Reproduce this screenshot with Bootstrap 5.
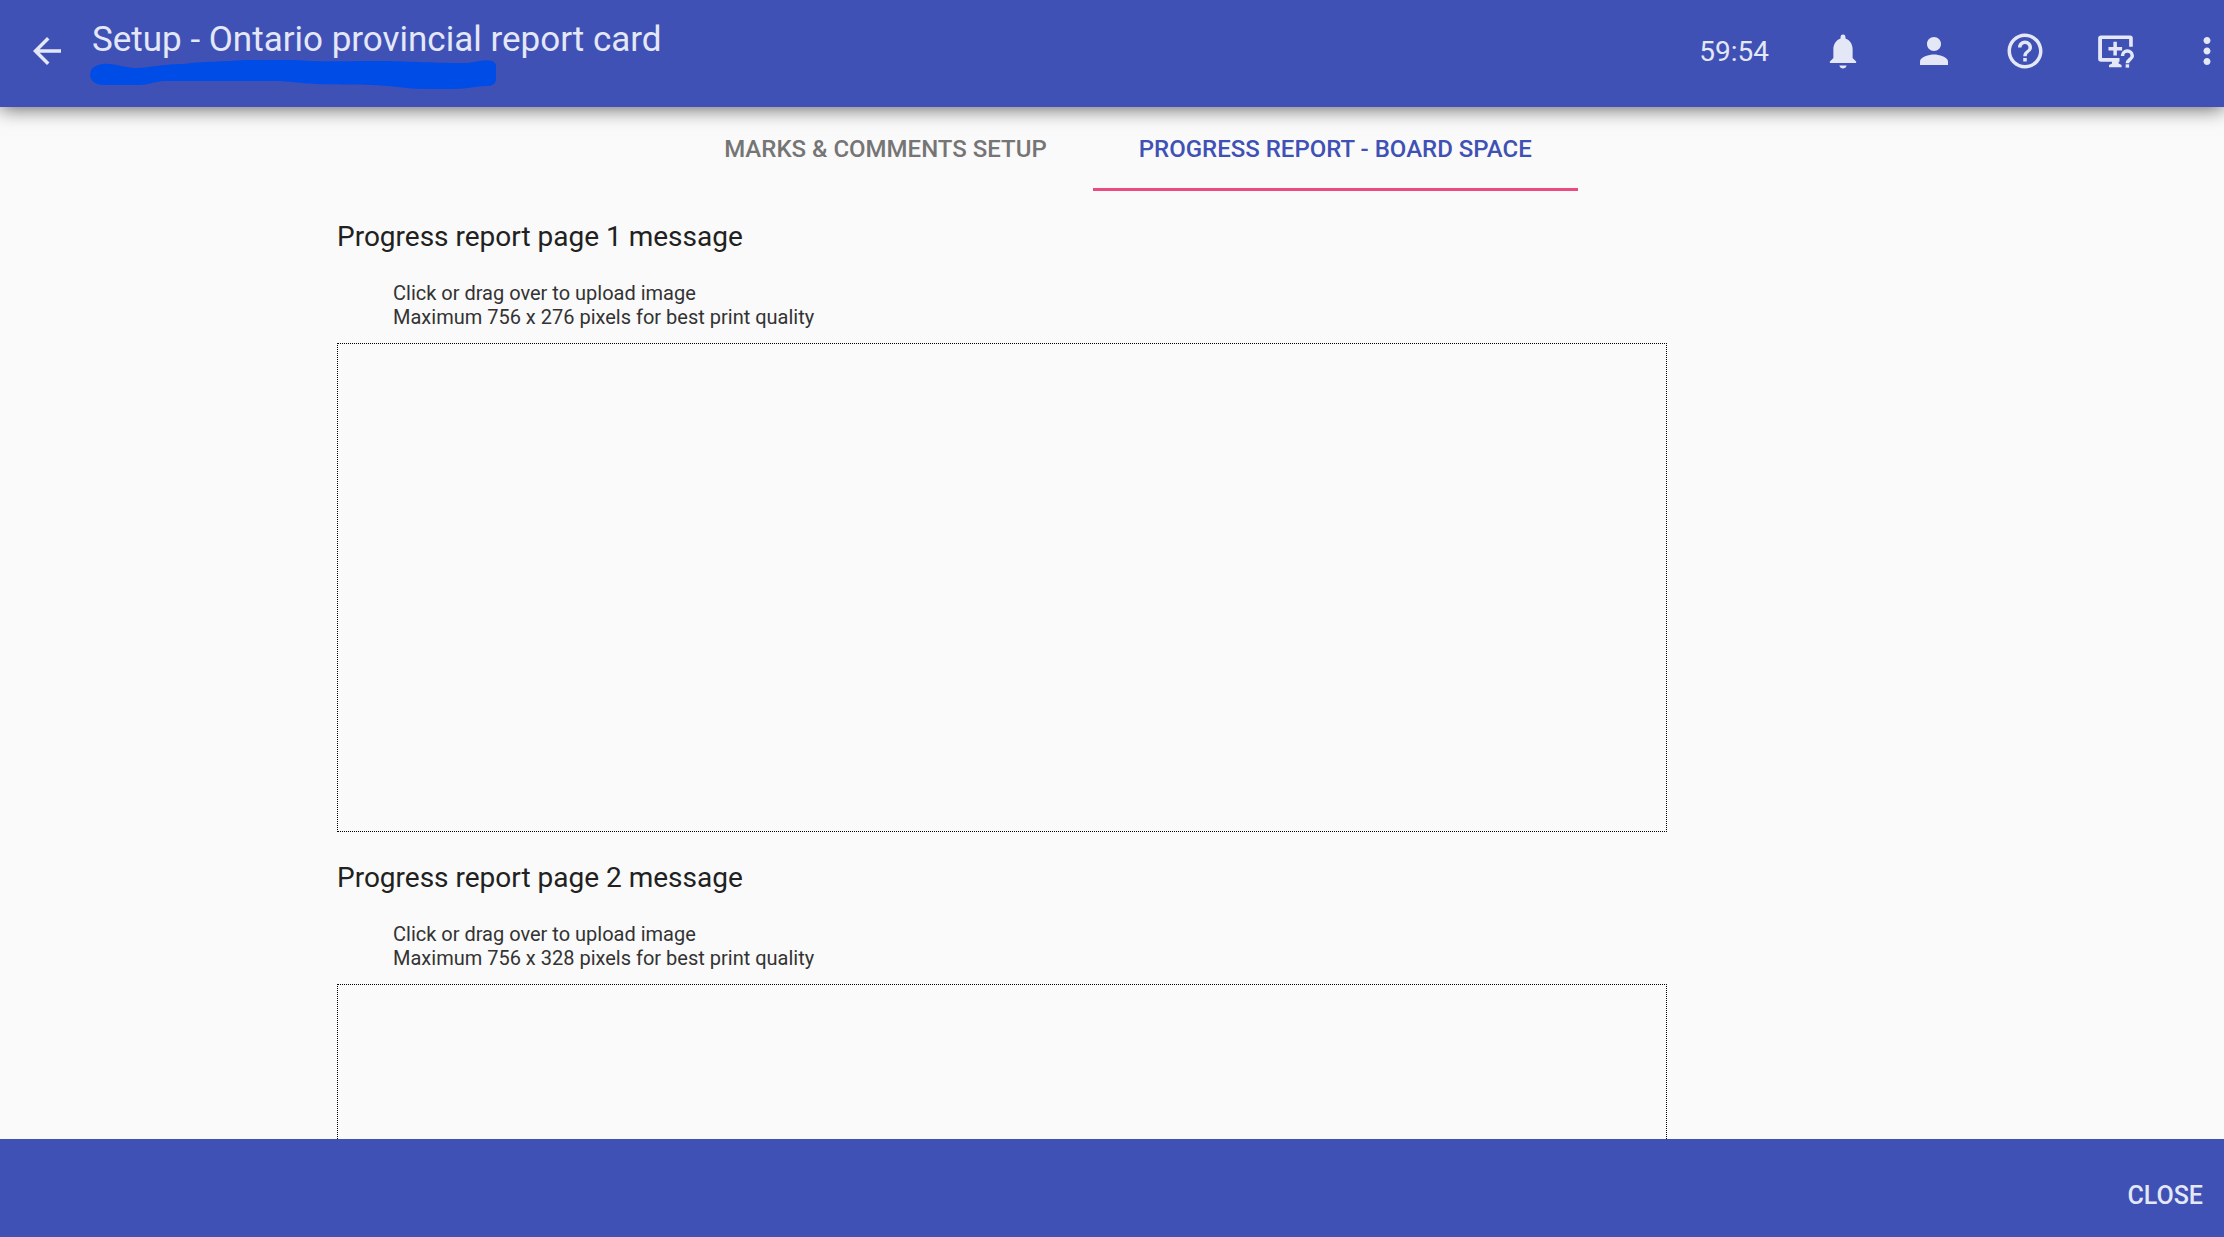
<!DOCTYPE html>
<html lang="en">
<head>
<meta charset="utf-8">
<meta name="viewport" content="width=device-width, initial-scale=1">
<title>Setup - Ontario provincial report card</title>
<link href="https://cdn.jsdelivr.net/npm/bootstrap@5.3.0/dist/css/bootstrap.min.css" rel="stylesheet">
<style>
body { font-family: Roboto, "Liberation Sans", sans-serif; background: #fafafa; color: #212121; }
.app-bar { background: #3f51b5; color: #e4e7f6; }
.top-bar { height: 107px; box-shadow: 0 2px 18px rgba(0,0,0,.6); z-index: 2; }
.bar-btn { background: none; border: 0; color: inherit; padding: 0; height: 102px; width: 91px; display: flex; align-items: center; justify-content: center; }
.back-btn { width: 64px; padding-left: 30px; }
.more-btn { width: 63px; justify-content: flex-end; padding-right: 10px; }
.bar-btn svg { height: 42px; fill: currentColor; flex: none; }
.title-block { padding: 20px 0 0 26px; }
.page-title { font-size: 35px; line-height: 40px; font-weight: 400; padding-left: 2px; }
.scribble { width: 407px; height: 30px; display: block; }
.session-time { font-size: 28px; line-height: 104px; padding-right: 28px; }
.tab-row { padding-left: 32px; }
.tab-row .nav-link { font-size: 24px; font-weight: 500; line-height: 28px; padding: 28px 46px 25px; color: #757575; border: 0; border-bottom: 3px solid transparent; border-radius: 0; }
.tab-row .nav-link.active { color: #3f51b5; border-bottom-color: #ea4c82; background: none; }
.page-column { max-width: 1550px; padding-top: 25px; }
.section-title { font-size: 28px; line-height: 42px; margin: 0 0 23px; font-weight: 400; }
.hint { font-size: 20px; line-height: 24px; padding-left: 56px; margin-bottom: 14px; color: #333; display: block; }
.message-section { max-width: 1330px; margin-bottom: 25px; }
.drop-zone { display: block; border: 1px dotted #000; height: 489px; cursor: pointer; }
.bottom-bar { height: 98px; padding: 16px 21px 0; z-index: 2; }
.close-btn { background: none; border: 0; padding: 0; color: inherit; font-size: 25px; font-weight: 500; }
</style>
<script src="https://cdn.jsdelivr.net/npm/bootstrap@5.3.0/dist/js/bootstrap.bundle.min.js"></script>
</head>
<body>
<div class="d-flex flex-column vh-100 overflow-hidden">
  <header class="app-bar top-bar d-flex align-items-start flex-shrink-0 position-relative">
    <button class="bar-btn back-btn" type="button" aria-label="Back"><svg viewBox="0 0 24 24"><path d="M20 11H7.83l5.59-5.59L12 4l-8 8 8 8 1.41-1.41L7.83 13H20v-2z"/></svg></button>
    <div class="title-block">
      <h1 class="page-title m-0">Setup - Ontario provincial report card</h1>
      <svg class="scribble" viewBox="0 0 407 30" aria-hidden="true"><path fill="#004ce6" d="M12 4C22 3 32 7 44 8C60 8 70 4 94 4C110 1 135 2 155 0H205C225 2 245 1 290 1C315 1 335 3 378 3C390 1 396-1 402 1Q407 3 406 9V20Q405 26 397 26C385 26 380 29 362 29H335C315 29 300 25 280 25C250 24 240 26 190 21H75C65 21 60 25 48 25H15Q1 25 0 15Q0 6 12 4Z"/></svg>
    </div>
    <div class="d-flex ms-auto">
      <span class="session-time">59:54</span>
      <button class="bar-btn" type="button" aria-label="Notifications"><svg viewBox="0 0 24 24"><path d="M9.900 20.300h4.200c-.3 1-1.100 1.700-2.100 1.700s-1.800-.7-2.100-1.700zM19.500 18v.9h-15V18l2-2v-5c0-3 1.600-5.400 4.100-6.200V3.900a1.400 1.400 0 0 1 2.800 0v.9c2.500.8 4.100 3.200 4.100 6.200v5z"/></svg></button>
      <button class="bar-btn" type="button" aria-label="Account"><svg viewBox="0 0 24 24"><path d="M12 12c2.210 0 4-1.790 4-4s-1.790-4-4-4-4 1.790-4 4 1.790 4 4 4zm0 2c-2.670 0-8 1.340-8 4v2h16v-2c0-2.660-5.330-4-8-4z"/></svg></button>
      <button class="bar-btn" type="button" aria-label="Help"><svg viewBox="0 0 24 24"><path d="M11 18h2v-2h-2v2zm1-16C6.480 2 2 6.480 2 12s4.480 10 10 10 10-4.480 10-10S17.520 2 12 2zm0 18c-4.410 0-8-3.590-8-8s3.590-8 8-8 8 3.590 8 8-3.590 8-8 8zm0-14c-2.210 0-4 1.790-4 4h2c0-1.100.9-2 2-2s2 .9 2 2c0 2-3 1.750-3 5h2c0-2.250 3-2.500 3-5 0-2.210-1.790-4-4-4z"/></svg></button>
      <button class="bar-btn" type="button" aria-label="Remote support"><svg viewBox="0 0 24 24"><path d="M3.500 3.200H20Q21.600 3.200 21.600 4.800V9.600H19.500V5.200H4V16H14V18.100H13.500V19.200L15.200 20V21.300H8V20L9.700 19.200V18.100H3.500Q1.800 18.100 1.800 16.500V4.800Q1.800 3.200 3.500 3.200ZM10.500 6.700h2V9.700H15.500V11.700H12.500V14.500H10.500V11.700H7.700V9.700h2.800Z"/><path fill="none" stroke="currentColor" stroke-width="2" d="M15.700 14.800A2.800 2.800 0 1 1 21.300 14.800C21.300 16.600 18.500 17 18.500 19"/><path d="M17.500 19.600h2v1.900h-2z"/></svg></button>
      <button class="bar-btn more-btn" type="button" aria-label="More"><svg viewBox="8 0 8 24"><path d="M12 8c1.100 0 2-.9 2-2s-.9-2-2-2-2 .9-2 2 .9 2 2 2zm0 2c-1.100 0-2 .9-2 2s.9 2 2 2 2-.9 2-2-.9-2-2-2zm0 6c-1.100 0-2 .9-2 2s.9 2 2 2 2-.9 2-2-.9-2-2-2z"/></svg></button>
    </div>
  </header>
  <main class="flex-grow-1 overflow-hidden">
    <nav class="nav tab-row justify-content-center">
      <a class="nav-link" href="#marks">MARKS &amp; COMMENTS SETUP</a>
      <a class="nav-link active" href="#board" aria-current="page">PROGRESS REPORT - BOARD SPACE</a>
    </nav>
    <div class="page-column mx-auto" id="board">
      <section class="message-section">
        <h2 class="section-title">Progress report page 1 message</h2>
        <label class="hint" for="page1">Click or drag over to upload image<br>Maximum 756 x 276 pixels for best print quality</label>
        <label class="drop-zone"><input class="visually-hidden" type="file" id="page1" accept="image/*"></label>
      </section>
      <section class="message-section">
        <h2 class="section-title">Progress report page 2 message</h2>
        <label class="hint" for="page2">Click or drag over to upload image<br>Maximum 756 x 328 pixels for best print quality</label>
        <label class="drop-zone"><input class="visually-hidden" type="file" id="page2" accept="image/*"></label>
      </section>
    </div>
  </main>
  <footer class="app-bar bottom-bar d-flex align-items-center justify-content-end flex-shrink-0">
    <button class="close-btn" type="button">CLOSE</button>
  </footer>
</div>
</body>
</html>
